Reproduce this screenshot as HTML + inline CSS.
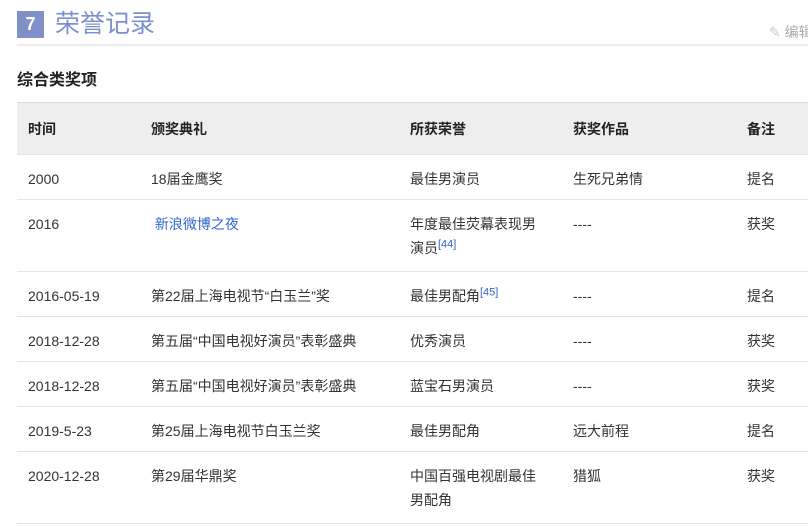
<!DOCTYPE html>
<html><head><meta charset="utf-8"><style>
body{margin:0;background:#fff;font-family:"Liberation Sans","Noto Sans CJK SC",sans-serif;color:#333;width:808px;height:526px;overflow:hidden;position:relative}
.badge{position:absolute;left:17px;top:11px;width:27px;height:27px;background:#8190c8;color:#fff;font-weight:bold;font-size:18px;text-align:center;line-height:27px}
.title{position:absolute;left:55px;top:7px;font-size:25px;color:#7c8fcf;line-height:34px}
.rule{position:absolute;left:17px;right:0;top:44px;height:2px;background:#ededed}
.edit{position:absolute;left:769px;top:22px;font-size:14px;color:#aaa;white-space:nowrap}
.sub{position:absolute;left:17px;top:66px;font-size:16px;font-weight:bold;color:#222}
table{position:absolute;left:17px;top:102px;width:800px;border-collapse:collapse;font-size:14px}
td,th{padding:0 0 0 11px;text-align:left;vertical-align:top;border-bottom:1px solid #e6e6e6;line-height:24px}
th{background:#eee;font-weight:bold;color:#222;height:52px;box-sizing:border-box;vertical-align:middle;border-top:1px solid #ddd}
td{height:45px;padding-top:12px;box-sizing:border-box}
tr.tall td{height:72px;padding-top:12px}
a{color:#3366cc;text-decoration:none}
sup{color:#3366cc;font-size:11px;line-height:0}
</style></head><body>
<div class="badge">7</div><div class="title">荣誉记录</div>
<div class="edit"><span style="color:#ccc">✎</span> 编辑</div>
<div class="rule"></div>
<div class="sub">综合类奖项</div>
<table>
<colgroup><col style="width:123px"><col style="width:259px"><col style="width:163px"><col style="width:174px"><col></colgroup>
<tr><th>时间</th><th>颁奖典礼</th><th>所获荣誉</th><th>获奖作品</th><th>备注</th></tr>
<tr><td>2000</td><td>18届金鹰奖</td><td>最佳男演员</td><td>生死兄弟情</td><td>提名</td></tr>
<tr class="tall"><td>2016</td><td>&nbsp;<a>新浪微博之夜</a></td><td>年度最佳荧幕表现男<br>演员<sup>[44]</sup></td><td>----</td><td>获奖</td></tr>
<tr><td>2016-05-19</td><td>第22届上海电视节“白玉兰”奖</td><td>最佳男配角<sup>[45]</sup></td><td>----</td><td>提名</td></tr>
<tr><td>2018-12-28</td><td>第五届“中国电视好演员”表彰盛典</td><td>优秀演员</td><td>----</td><td>获奖</td></tr>
<tr><td>2018-12-28</td><td>第五届“中国电视好演员”表彰盛典</td><td>蓝宝石男演员</td><td>----</td><td>获奖</td></tr>
<tr><td>2019-5-23</td><td>第25届上海电视节白玉兰奖</td><td>最佳男配角</td><td>远大前程</td><td>提名</td></tr>
<tr class="tall"><td>2020-12-28</td><td>第29届华鼎奖</td><td>中国百强电视剧最佳<br>男配角</td><td>猎狐</td><td>获奖</td></tr>
</table>
</body></html>
